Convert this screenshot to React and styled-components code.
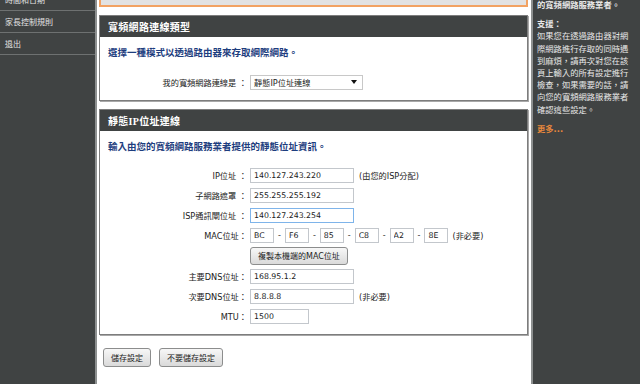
import React from 'react';
import styled, { createGlobalStyle } from 'styled-components';

const FONT = `"DejaVu Sans", "Noto Sans CJK TC", sans-serif`;
const HEAD_FONT = `"Liberation Serif", "Noto Sans CJK TC", serif`;

const GlobalStyle = createGlobalStyle`
  html, body { margin: 0; padding: 0; width: 640px; height: 384px; overflow: hidden; background: #fff; }
  body { font-family: ${FONT}; }
`;

const Page = styled.div`
  display: flex;
  width: 640px;
  height: 384px;
  overflow: hidden;
`;

const LeftNav = styled.nav`
  flex: none;
  width: 97px;
  box-sizing: border-box;
  background: #404343;
  border-right: 2px solid #8d9090;
`;

const NavList = styled.ul`
  list-style: none;
  margin: -11px 0 0;
  padding: 0;
`;

const NavItem = styled.li`
  height: 21px;
  border-bottom: 1px solid #6e7171;
  display: flex;
  align-items: center;
  padding-left: 5px;
  font-family: ${FONT};
  font-size: 8px;
  color: #e4e4e4;
`;

const Main = styled.main`
  flex: 1;
  min-width: 0;
  background: #fff;
  padding: 0 3px 0 2px;
  display: flex;
  flex-direction: column;
  gap: 8px;
`;

const NoticeBox = styled.div`
  height: 5px;
  background: #e2e2e2;
  border: 2px solid #f2a262;
  border-top: none;
`;

const Section = styled.section`
  border: 1px solid #7d7d7d;
  box-shadow: 1px 1px 0 #a8a8a8;
  background: #fff;
`;

const SectionHeader = styled.h2`
  margin: 0;
  height: 21px;
  background: #404343;
  color: #fff;
  font-family: ${HEAD_FONT};
  font-weight: bold;
  font-size: 10px;
  letter-spacing: 0.3px;
  display: flex;
  align-items: center;
  padding-left: 8px;
`;

const SectionBody = styled.div`
  padding: 9px 0 8px;
  display: flex;
  flex-direction: column;
`;

const Intro = styled.p`
  margin: 0 0 ${(p) => p.$after}px;
  padding-left: 8px;
  height: 14px;
  line-height: 14px;
  font-family: ${HEAD_FONT};
  font-weight: bold;
  font-size: 9.5px;
  color: #1d3d7e;
`;

const FormRow = styled.div`
  display: grid;
  grid-template-columns: 147px 1fr;
  column-gap: 3px;
  align-items: center;
  height: ${(p) => p.$h || 20}px;
`;

const Label = styled.label`
  text-align: right;
  white-space: nowrap;
  font-family: ${FONT};
  font-size: 8.2px;
  color: #222;
`;

const Field = styled.div`
  display: flex;
  align-items: center;
  gap: 4px;
`;

const TextInput = styled.input`
  box-sizing: border-box;
  width: ${(p) => p.$w}px;
  height: 15px;
  margin: 0;
  padding: 0 0 0 3px;
  border: 1px solid ${(p) => (p.$focus ? '#7eb4ea' : '#c3c7cc')};
  background: #fff;
  font-family: "DejaVu Sans", sans-serif;
  font-size: 7.8px;
  color: #222;
  outline: none;
`;

const Hint = styled.span`
  margin-left: ${(p) => p.$ml || 0}px;
  font-family: ${FONT};
  font-size: 8.2px;
  color: #222;
  white-space: nowrap;
`;

const Dash = styled.span`
  font-family: "DejaVu Sans", sans-serif;
  font-size: 8px;
  color: #333;
`;

const FakeSelect = styled.div`
  box-sizing: border-box;
  width: 113px;
  height: 15px;
  border: 1px solid #c8c8c8;
  background: #fff;
  display: flex;
  align-items: center;
  justify-content: space-between;
  padding: 0 5px 0 3px;
  font-family: ${FONT};
  font-size: 8.2px;
  color: #222;
`;

const Button = styled.button`
  box-sizing: border-box;
  height: ${(p) => p.$h}px;
  margin: 0;
  padding: 0 7px;
  border: 1px solid #8c8d8d;
  border-radius: 3px;
  background: linear-gradient(#f7f7f7, #dadada);
  font-family: ${FONT};
  font-size: 8px;
  color: #222;
  white-space: nowrap;
  cursor: pointer;
`;

const ButtonBar = styled.div`
  display: flex;
  gap: 8px;
  padding-left: 4px;
  margin-top: 5px;
`;

const Aside = styled.aside`
  flex: none;
  width: 109px;
  box-sizing: border-box;
  background: #404343;
  border-left: 2px solid #8d9090;
  padding: 0 8px 0 4px;
  font-family: ${FONT};
  font-size: 8.3px;
  line-height: 12.2px;
  color: #e8e8e8;
`;

const AsideText = styled.p`
  margin: ${(p) => p.$mt || 0}px 0 0;
  font-weight: ${(p) => (p.$bold ? 'bold' : 'normal')};
  color: ${(p) => (p.$accent ? '#e8883c' : '#e8e8e8')};
`;

const Caret = () => (
  <svg width="6" height="4" viewBox="0 0 6 4">
    <path d="M0 0 L6 0 L3 4 Z" fill="#111" />
  </svg>
);

const macParts = ['BC', 'F6', '85', 'C8', 'A2', '8E'];

export default function App() {
  return (
    <>
      <GlobalStyle />
      <Page>
        <LeftNav>
          <NavList>
            <NavItem>時間和日期</NavItem>
            <NavItem>家長控制規則</NavItem>
            <NavItem>退出</NavItem>
          </NavList>
        </LeftNav>

        <Main>
          <NoticeBox />

          <Section>
            <SectionHeader>寬頻網路連線類型</SectionHeader>
            <SectionBody>
              <Intro $after={12}>選擇一種模式以透過路由器來存取網際網路。</Intro>
              <FormRow>
                <Label>我的寬頻網路連線是 ：</Label>
                <Field>
                  <FakeSelect>
                    <span>靜態IP位址連線</span>
                    <Caret />
                  </FakeSelect>
                </Field>
              </FormRow>
            </SectionBody>
          </Section>

          <Section>
            <SectionHeader>靜態IP位址連線</SectionHeader>
            <SectionBody>
              <Intro $after={11}>輸入由您的寬頻網路服務業者提供的靜態位址資訊。</Intro>
              <FormRow>
                <Label>IP位址 ：</Label>
                <Field>
                  <TextInput $w={104} defaultValue="140.127.243.220" />
                  <Hint $ml={1}>(由您的ISP分配)</Hint>
                </Field>
              </FormRow>
              <FormRow>
                <Label>子網路遮罩 ：</Label>
                <Field>
                  <TextInput $w={104} defaultValue="255.255.255.192" />
                </Field>
              </FormRow>
              <FormRow>
                <Label>ISP通訊閘位址 ：</Label>
                <Field>
                  <TextInput $w={104} $focus defaultValue="140.127.243.254" />
                </Field>
              </FormRow>
              <FormRow>
                <Label>MAC位址：</Label>
                <Field>
                  {macParts.map((m, i) => (
                    <React.Fragment key={m}>
                      {i > 0 && <Dash>-</Dash>}
                      <TextInput $w={24} defaultValue={m} />
                    </React.Fragment>
                  ))}
                  <Hint>(非必要)</Hint>
                </Field>
              </FormRow>
              <FormRow $h={21}>
                <span />
                <Field>
                  <Button $h={18}>複製本機端的MAC位址</Button>
                </Field>
              </FormRow>
              <FormRow>
                <Label>主要DNS位址：</Label>
                <Field>
                  <TextInput $w={104} defaultValue="168.95.1.2" />
                </Field>
              </FormRow>
              <FormRow>
                <Label>次要DNS位址：</Label>
                <Field>
                  <TextInput $w={104} defaultValue="8.8.8.8" />
                  <Hint $ml={1}>(非必要)</Hint>
                </Field>
              </FormRow>
              <FormRow>
                <Label>MTU：</Label>
                <Field>
                  <TextInput $w={59} defaultValue="1500" />
                </Field>
              </FormRow>
            </SectionBody>
          </Section>

          <ButtonBar>
            <Button $h={19}>儲存設定</Button>
            <Button $h={19}>不要儲存設定</Button>
          </ButtonBar>
        </Main>

        <Aside>
          <AsideText $mt={-1} $bold>的寬頻網路服務業者。</AsideText>
          <AsideText $mt={7} $bold>支援：</AsideText>
          <AsideText>
            如果您在透過路由器對網際網路進行存取的同時遇到麻煩，請再次對您在該頁上輸入的所有設定進行檢查，如果需要的話，請向您的寬頻網路服務業者確認這些設定。
          </AsideText>
          <AsideText $mt={7} $bold $accent>更多...</AsideText>
        </Aside>
      </Page>
    </>
  );
}
